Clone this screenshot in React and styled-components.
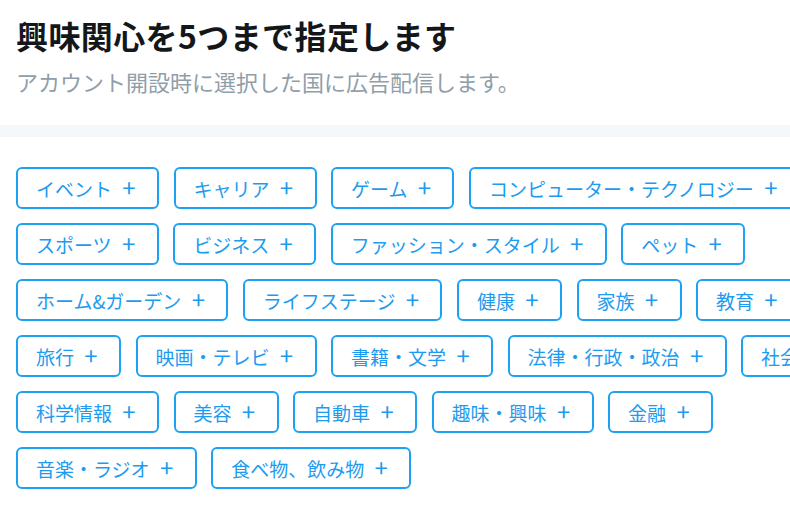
import React from "react"
import styled, { createGlobalStyle } from "styled-components"

const GlobalStyle = createGlobalStyle`
  html, body {
    margin: 0;
    padding: 0;
    background: #fff;
    overflow: hidden;
  }
  body {
    font-family: "Noto Sans CJK JP", "Noto Sans", sans-serif;
  }
`

const interests = [
  "イベント",
  "キャリア",
  "ゲーム",
  "コンピューター・テクノロジー",
  "スポーツ",
  "ビジネス",
  "ファッション・スタイル",
  "ペット",
  "ホーム&ガーデン",
  "ライフステージ",
  "健康",
  "家族",
  "教育",
  "旅行",
  "映画・テレビ",
  "書籍・文学",
  "法律・行政・政治",
  "社会",
  "科学情報",
  "美容",
  "自動車",
  "趣味・興味",
  "金融",
  "音楽・ラジオ",
  "食べ物、飲み物",
]

export default function App() {
  return (
    <Page>
      <GlobalStyle />
      <Header>
        <Title>興味関心を5つまで指定します</Title>
        <Subtitle>アカウント開設時に選択した国に広告配信します。</Subtitle>
      </Header>
      <Divider />
      <TagList>
        {interests.map(label => (
          <Tag key={label} type="button">
            {label}
            <Plus>+</Plus>
          </Tag>
        ))}
      </TagList>
    </Page>
  )
}

const Page = styled.div`
  width: 870px;
  min-height: 530px;
  background: #fff;
`

const Header = styled.header`
  padding: 14px 16px 0;
  height: 125px;
  box-sizing: border-box;
`

const Title = styled.h1`
  margin: 0;
  font-size: 32px;
  line-height: 42px;
  font-weight: 700;
  color: #14171a;
  letter-spacing: 0.4px;
`

const Subtitle = styled.p`
  margin: 11px 0 0;
  font-size: 22px;
  line-height: 28px;
  font-weight: 400;
  color: #8f9ea9;
`

const Divider = styled.div`
  height: 12px;
  background: #f5f8fa;
`

const TagList = styled.div`
  display: flex;
  flex-wrap: wrap;
  gap: 14px 14.5px;
  padding: 30px 16px;
`

const Tag = styled.button`
  display: inline-flex;
  align-items: center;
  height: 42px;
  box-sizing: border-box;
  padding: 0 20px 0 18px;
  border: 2px solid #1da1f2;
  border-radius: 6px;
  background: #fff;
  color: #1d9bf0;
  font-family: "Noto Sans CJK JP", "Noto Sans", sans-serif;
  font-size: 19px;
  line-height: 1;
  white-space: nowrap;
  cursor: pointer;
`

const Plus = styled.span`
  display: inline-block;
  margin-left: 9px;
  width: 16px;
  text-align: center;
  font-size: 24px;
  font-weight: 400;
  line-height: 1;
  position: relative;
  top: -1px;
`
